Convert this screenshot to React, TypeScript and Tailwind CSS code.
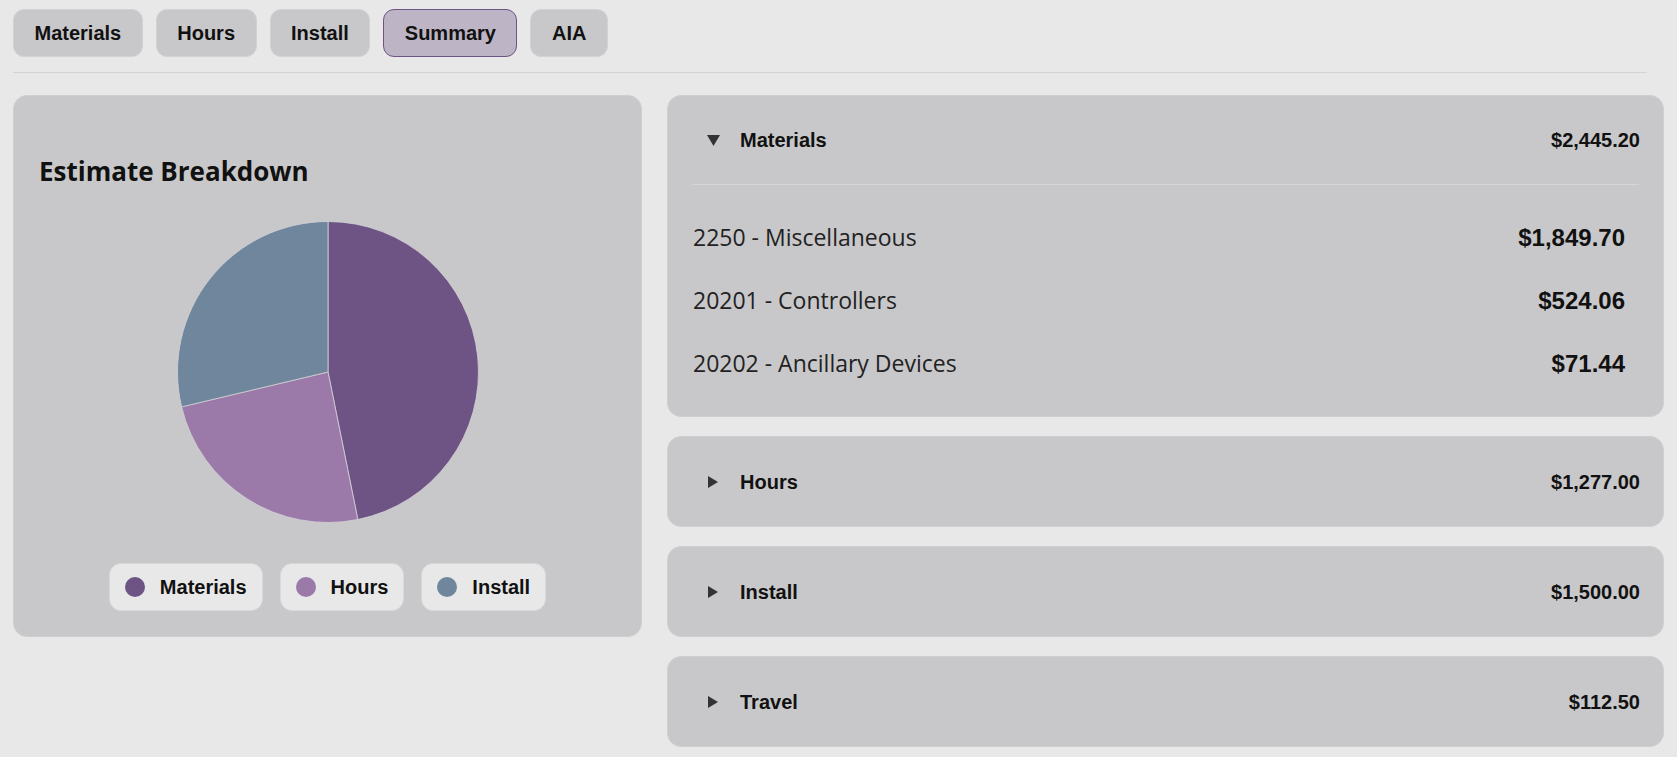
import type { ReactNode } from "react";

const tabs = ["Materials", "Hours", "Install", "Summary", "AIA"];

const slices = [
  { label: "Materials", value: 2445.2, color: "#6d5485" },
  { label: "Hours", value: 1277, color: "#9b79a8" },
  { label: "Install", value: 1500, color: "#6f869c" },
];

const materialRows = [
  { label: "2250 - Miscellaneous", amount: "$1,849.70" },
  { label: "20201 - Controllers", amount: "$524.06" },
  { label: "20202 - Ancillary Devices", amount: "$71.44" },
];

const sections = [
  { label: "Hours", amount: "$1,277.00" },
  { label: "Install", amount: "$1,500.00" },
  { label: "Travel", amount: "$112.50" },
];

const arial = "font-['Liberation_Sans',Arial,sans-serif]";
const segoe = "font-['Open_Sans','Segoe_UI',sans-serif]";

function Pie() {
  const total = slices.reduce((s, x) => s + x.value, 0);
  const r = 150.5;
  let start = 0;
  const pt = (a: number) => {
    const rad = (a * Math.PI) / 180;
    return `${151 + r * Math.sin(rad)} ${151 - r * Math.cos(rad)}`;
  };
  return (
    <svg width="302" height="302" viewBox="0 0 302 302">
      {slices.map((s) => {
        const sweep = (s.value / total) * 360;
        const end = start + sweep;
        const d = `M151 151 L${pt(start)} A${r} ${r} 0 ${sweep > 180 ? 1 : 0} 1 ${pt(end)} Z`;
        start = end;
        return <path key={s.label} d={d} fill={s.color} stroke="#d4d2d8" strokeWidth="0.8" />;
      })}
    </svg>
  );
}

function Caret({ open }: { open?: boolean }) {
  return open ? (
    <svg width="13" height="11" viewBox="0 0 13 11" className="ml-[14px] mr-[20px] shrink-0">
      <path d="M0 0h13L6.5 11z" fill="#333" />
    </svg>
  ) : (
    <svg width="10" height="12" viewBox="0 0 10 12" className="ml-[15px] mr-[22px] shrink-0">
      <path d="M0 0l10 6-10 6z" fill="#333" />
    </svg>
  );
}

function Card({ children }: { children: ReactNode }) {
  return <div className="rounded-[14px] border border-[#cfcfd1] bg-[#c8c8ca]">{children}</div>;
}

function SectionHeader({ label, amount, open }: { label: string; amount: string; open?: boolean }) {
  return (
    <div
      className={`flex items-center pl-[25px] pr-[23px] text-[20px] font-bold text-[#111] ${arial} ${
        open ? "h-[88px]" : "h-[89px]"
      }`}
    >
      <Caret open={open} />
      <span className="flex-1">{label}</span>
      <span>{amount}</span>
    </div>
  );
}

export default function App() {
  return (
    <div className="min-h-screen bg-[#e8e8e8] px-[13px] pt-[9px]">
      <nav className="flex gap-[13px]">
        {tabs.map((t) => (
          <button
            key={t}
            className={`rounded-[11px] border px-[20.5px] py-[11px] text-[20px] font-bold leading-[24px] text-[#111] ${arial} ${
              t === "Summary" ? "border-[#6d5485] bg-[#bdb5c5]" : "border-[#d2d2d4] bg-[#c8c8ca]"
            }`}
          >
            {t}
          </button>
        ))}
      </nav>
      <div className="mr-[17px] mt-[15px] h-px bg-[#d3d3d3]" />

      <div className="mt-[22px] flex items-start gap-[25px]">
        <section className="flex w-[629px] shrink-0 flex-col rounded-[14px] border border-[#cfcfd1] bg-[#c8c8ca] px-[25px] pb-[25px] pt-[57px]">
          <h2 className={`text-[26px] font-bold leading-[36px] text-[#111] ${segoe}`}>Estimate Breakdown</h2>
          <div className="mt-[32px] flex justify-center">
            <Pie />
          </div>
          <div className="mt-[40px] flex justify-center gap-[17px]">
            {slices.map((s) => (
              <div
                key={s.label}
                className="flex h-[48px] items-center gap-[15px] rounded-[12px] border border-[#d9d9d9] bg-[#e8e8e8] pl-[15px] pr-[15px]"
              >
                <span className="h-[20px] w-[20px] rounded-full" style={{ backgroundColor: s.color }} />
                <span className={`text-[20px] font-bold text-[#111] ${arial}`}>{s.label}</span>
              </div>
            ))}
          </div>
        </section>

        <div className="flex flex-1 flex-col gap-[19px]">
          <Card>
            <SectionHeader label="Materials" amount="$2,445.20" open />
            <div className="mx-[24px] h-px bg-[#d6d6d8]" />
            <div className="py-[21px] pl-[25px] pr-[38px]">
              {materialRows.map((r) => (
                <div key={r.label} className="flex h-[63px] items-center justify-between">
                  <span className={`text-[23px] text-[#222] ${segoe}`}>{r.label}</span>
                  <span className={`text-[24px] font-bold text-[#111] ${arial}`}>{r.amount}</span>
                </div>
              ))}
            </div>
          </Card>
          {sections.map((s) => (
            <Card key={s.label}>
              <SectionHeader label={s.label} amount={s.amount} />
            </Card>
          ))}
        </div>
      </div>
    </div>
  );
}
